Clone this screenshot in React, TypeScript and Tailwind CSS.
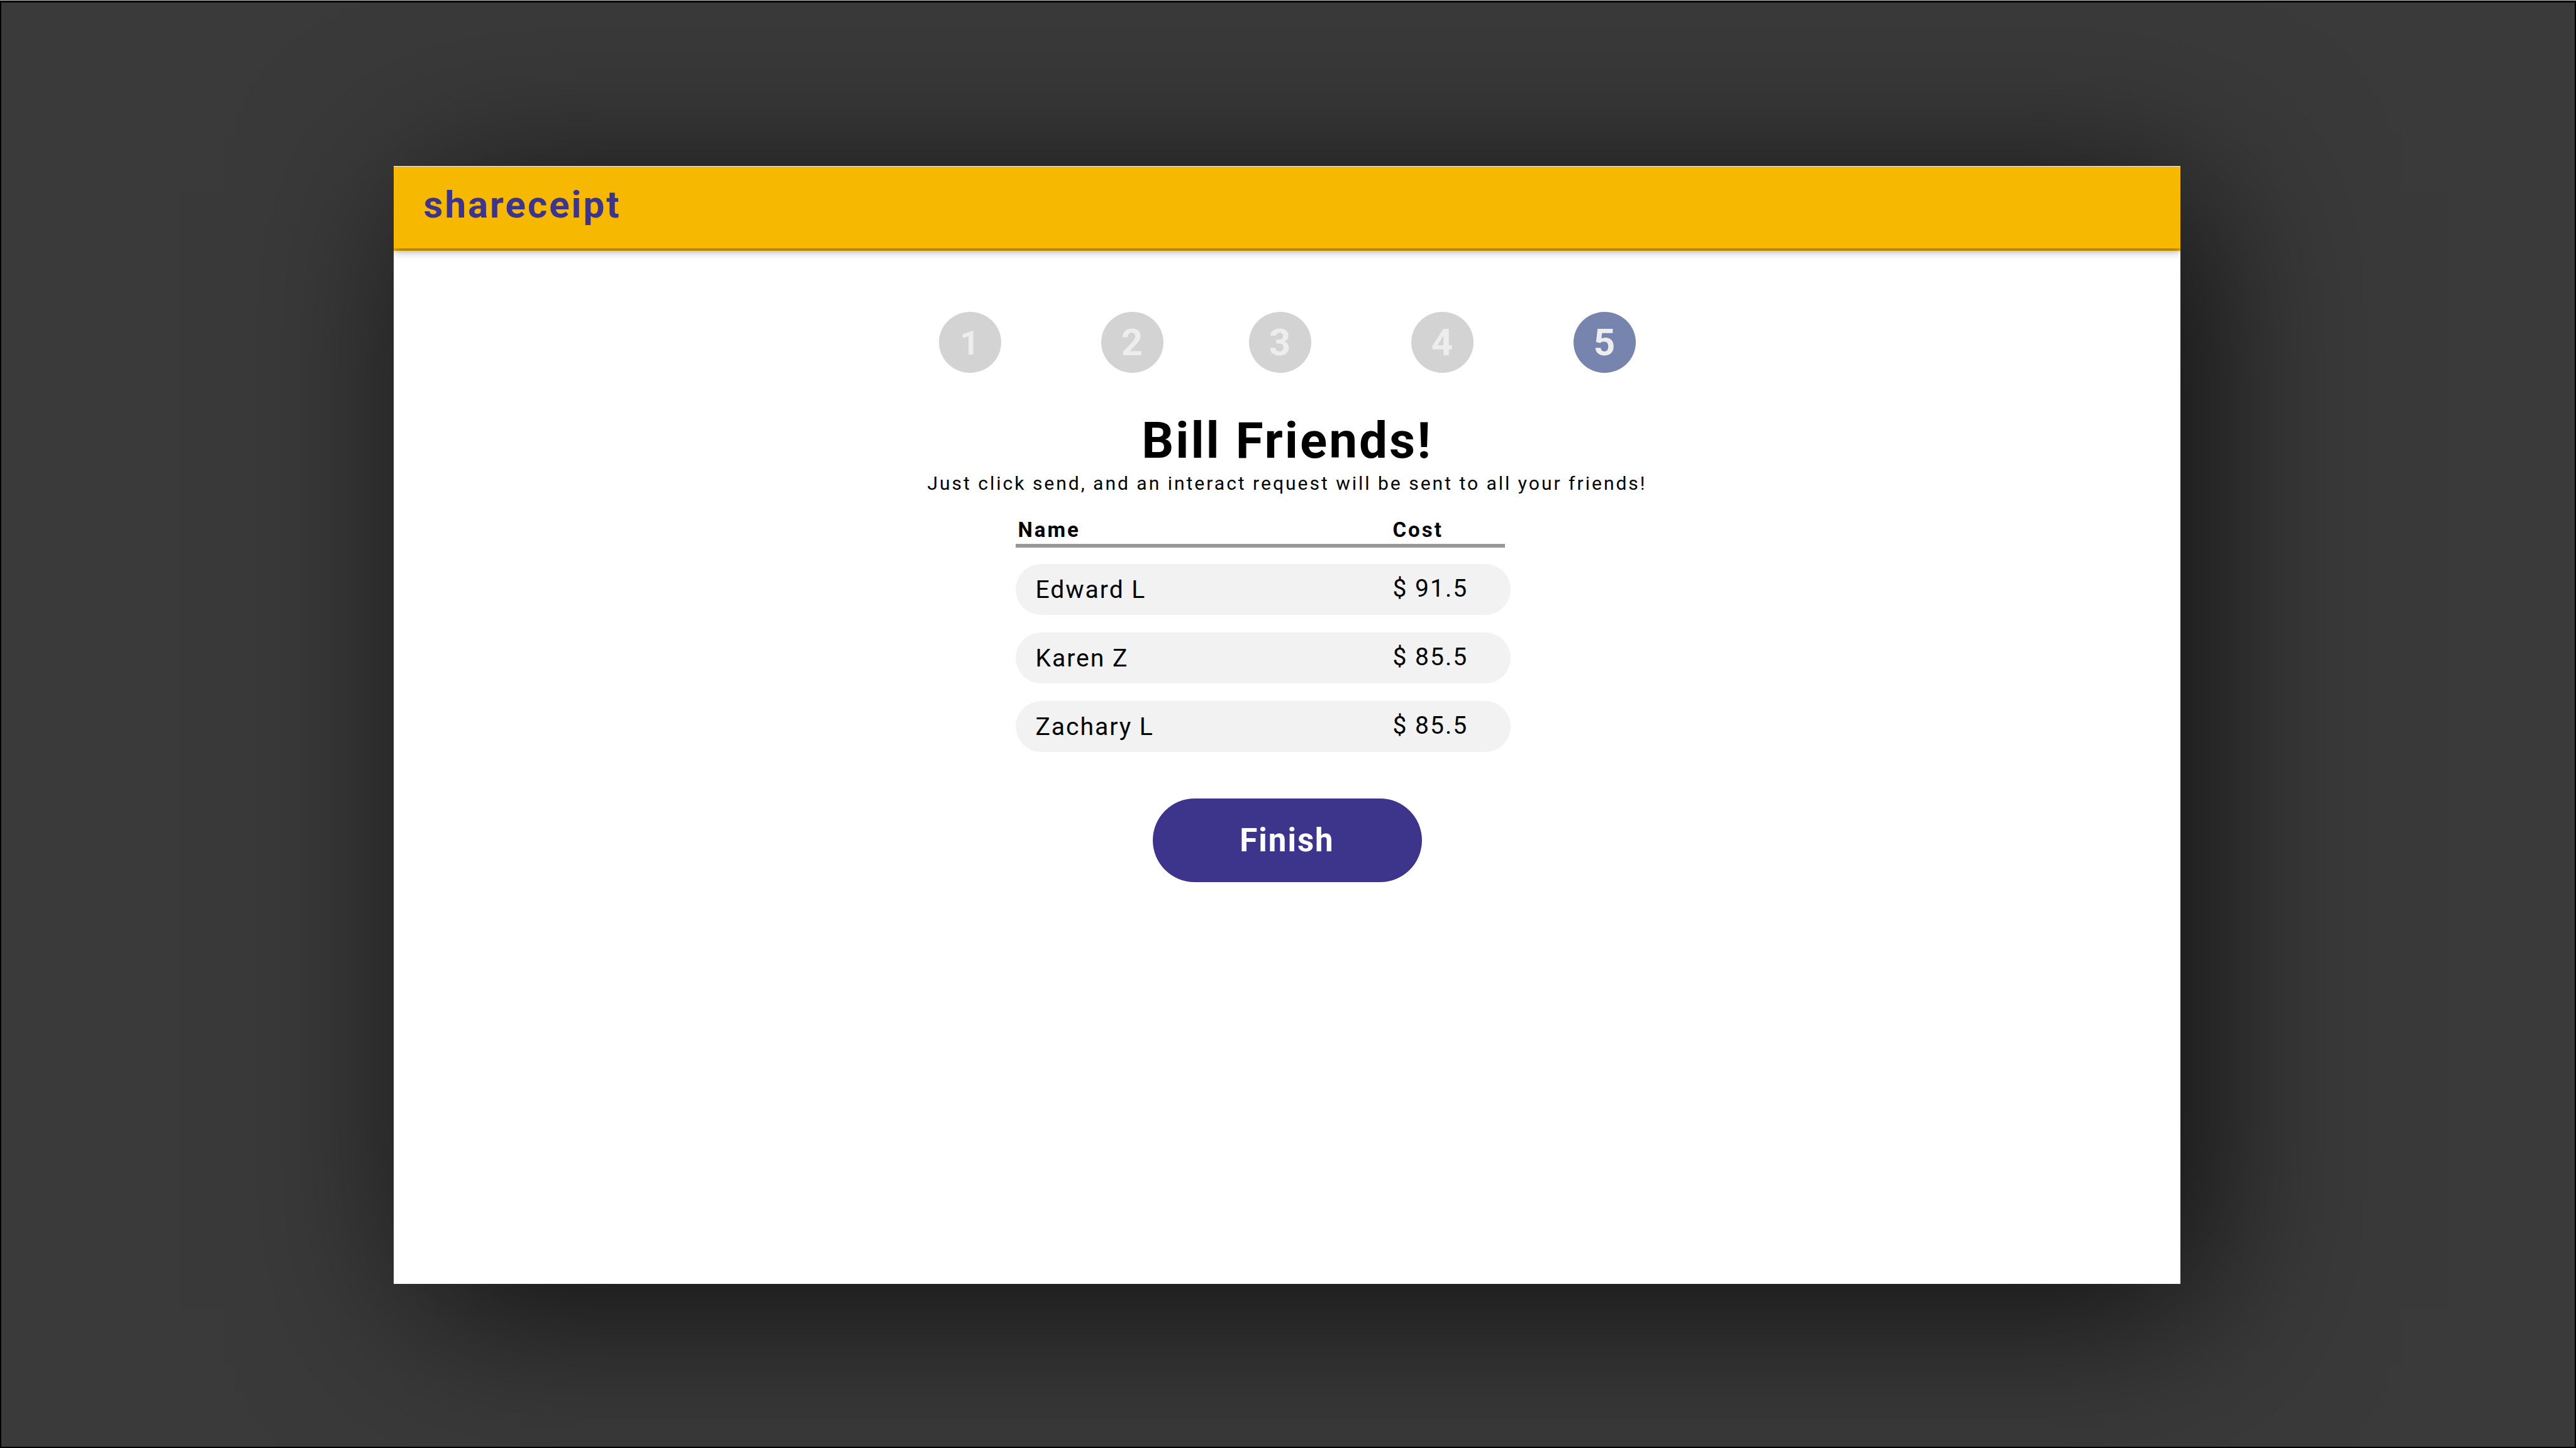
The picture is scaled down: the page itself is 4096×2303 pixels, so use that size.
const steps = [
  { label: "1", size: "text-[54px]", box: "bg-[#d3d3d3]" },
  { label: "2", size: "text-[60px]", box: "ml-[159px] bg-[#d3d3d3]" },
  { label: "3", size: "text-[60px]", box: "ml-[136px] bg-[#d3d3d3]" },
  { label: "4", size: "text-[60px]", box: "ml-[159px] bg-[#d3d3d3]" },
  { label: "5", size: "text-[60px]", box: "ml-[159px] bg-[#7784ad]", current: true },
];

const friends = [
  { name: "Edward L", cost: "$ 91.5" },
  { name: "Karen Z", cost: "$ 85.5" },
  { name: "Zachary L", cost: "$ 85.5" },
];

function Header() {
  return (
    <header className="relative z-10 bg-[#f7b801] pb-1">
      <div className="bg-[#f7b801] px-12 pt-[26px] pb-[34px] shadow-[0_4px_8px_-2px_rgba(0,0,0,0.2),0_8px_10px_0_rgba(0,0,0,0.14),0_2px_20px_0_rgba(0,0,0,0.12)]">
        <h1 className="text-[60px] leading-[70px] font-bold tracking-[3px] text-[#3d348b]">
          shareceipt
        </h1>
      </div>
    </header>
  );
}

function Steps() {
  return (
    <ol className="flex justify-center">
      {steps.map((step) => (
        <li
          key={step.label}
          aria-current={step.current ? "step" : undefined}
          className={`flex h-[97px] w-[99px] shrink-0 items-center justify-center rounded-[50%] text-[60px] leading-[70px] font-bold text-[#ededed] ${step.box}`}
        >
          <p>
            <span className={step.size}>{step.label}</span>
          </p>
        </li>
      ))}
    </ol>
  );
}

function CostTable() {
  return (
    <div className="mx-auto mt-8 w-full max-w-[864px] pr-[77px]">
      <table className="block text-left text-black">
        <thead className="block pr-[9px]">
          <tr className="flex border-b-6 border-[#979797] text-[33px] leading-[44px] tracking-[3px]">
            <th scope="col" className="w-[600px] pl-1 font-bold">Name</th>
            <th scope="col" className="font-bold">Cost</th>
          </tr>
        </thead>
        <tbody className="mt-[26px] flex flex-col gap-7">
          {friends.map((friend) => (
            <tr
              key={friend.name}
              className="flex rounded-full bg-[#f2f2f2] text-[39px] leading-[47px] tracking-[2px]"
            >
              <td className="w-[600px] pt-[18px] pb-4 pl-8">{friend.name}</td>
              <td className="pt-4 pb-[18px]">{friend.cost}</td>
            </tr>
          ))}
        </tbody>
      </table>
    </div>
  );
}

export default function App() {
  return (
    <div className="flex min-h-screen flex-col border-t border-[#bfc5c0] font-['Roboto',sans-serif]">
      <div className="flex-1 overflow-hidden border-2 border-t-3 border-black bg-[#3a3a3a] pt-[260px] pr-[3px] pb-[259px]">
        <div className="mx-auto min-h-[1778px] w-[69.5%] overflow-hidden bg-white pt-px shadow-[40px_40px_300px_0_rgba(0,0,0,0.72)]">
          <Header />
          <main className="flex flex-col items-center pt-[97px]">
            <Steps />
            <h2 className="mt-[60px] text-[80px] leading-[96px] font-bold tracking-[3px] text-black">
              Bill Friends!
            </h2>
            <p className="text-[30px] leading-[40px] tracking-[3px] text-black">
              Just click send, and an interact request will be sent to all your friends!
            </p>
            <CostTable />
            <button
              type="button"
              className="mt-[74px] w-[428px] rounded-full bg-[#3d348b] py-9 text-[51px] leading-[61px] font-bold tracking-[2px] text-white"
            >
              Finish
            </button>
          </main>
        </div>
      </div>
    </div>
  );
}
